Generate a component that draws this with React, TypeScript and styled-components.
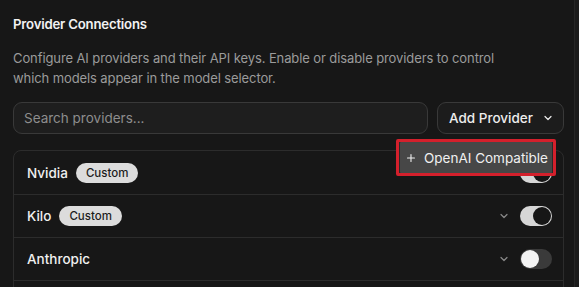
import React from "react";
import styled, { createGlobalStyle } from "styled-components";

const Global = createGlobalStyle`
  html, body { margin: 0; padding: 0; background: #171717; }
  body { font-family: "Inter", "Liberation Sans", sans-serif; color: #ededed; }
  * { box-sizing: border-box; }
`;

const Page = styled.div`
  width: 579px;
  height: 287px;
  display: flex;
  overflow: hidden;
  background: #171717;
`;

const Main = styled.div`
  flex: 1;
  padding: 14px 10px 0 13px;
  display: flex;
  flex-direction: column;
`;

const Edge = styled.div`
  width: 5px;
  border-left: 1px solid #262626;
  background: #1b1b1b;
`;

const Title = styled.h2`
  margin: 0;
  font-size: 13.2px;
  font-weight: 600;
  letter-spacing: -0.2px;
  line-height: 20px;
  color: #f2f2f2;
`;

const Desc = styled.p`
  margin: 15px 0 0;
  max-width: 500px;
  font-size: 13px;
  line-height: 19.5px;
  color: #9b9b9b;
  letter-spacing: -0.1px;
`;

const Toolbar = styled.div`
  margin-top: 14px;
  display: flex;
  gap: 9px;
`;

const Search = styled.input`
  flex: 1;
  height: 32px;
  border-radius: 9px;
  border: 1px solid #393939;
  background: #1e1e1e;
  padding: 0 10px;
  font-family: inherit;
  font-size: 13.5px;
  color: #eee;
  outline: none;
  &::placeholder { color: #8d8d8d; }
`;

const MenuAnchor = styled.div`
  position: relative;
`;

const AddButton = styled.button`
  height: 32px;
  width: 127px;
  border-radius: 9px;
  border: 1px solid #393939;
  background: #1c1c1c;
  color: #ededed;
  font-family: inherit;
  font-size: 13.5px;
  font-weight: 500;
  display: flex;
  align-items: center;
  justify-content: center;
  gap: 9px;
  padding: 0 8px 0 10px;
`;

const Menu = styled.div`
  position: absolute;
  top: 37px;
  right: 8px;
  width: 160px;
  border: 3px solid #d4202c;
  border-radius: 2px;
  background: #2a2a2a;
  z-index: 5;
`;

const MenuItem = styled.div`
  height: 31px;
  display: flex;
  align-items: center;
  gap: 7px;
  padding: 0 4px 0 5px;
  background: #474747;
  border-radius: 1px;
  color: #f0f0f0;
  font-size: 13.5px;
  white-space: nowrap;
  margin: 0 1px;
`;

const List = styled.div`
  margin-top: 16px;
  border: 1px solid #2c2c2c;
  border-radius: 8px;
  display: flex;
  flex-direction: column;
`;

const Row = styled.div`
  height: 43px;
  flex: none;
  display: flex;
  align-items: center;
  padding: 0 11px 0 13px;
  border-top: 1px solid #2c2c2c;
  &:first-child { border-top: none; }
`;

const Name = styled.span`
  font-size: 13.5px;
  font-weight: 500;
  color: #f0f0f0;
`;

const Badge = styled.span`
  margin-left: 8px;
  height: 20px;
  padding: 0 10px;
  border-radius: 10px;
  background: #dcdcdc;
  color: #1c1c1c;
  font-size: 11.5px;
  font-weight: 500;
  display: inline-flex;
  align-items: center;
`;

const Spacer = styled.div`
  flex: 1;
`;

const Chevron = styled.span`
  color: #8a8a8a;
  display: flex;
  margin-right: 10px;
`;

const Track = styled.span<{ $on: boolean }>`
  width: 32px;
  height: 20px;
  border-radius: 10px;
  background: ${(p) => (p.$on ? "#d6d6d6" : "#3a3a3a")};
  display: flex;
  align-items: center;
  justify-content: ${(p) => (p.$on ? "flex-end" : "flex-start")};
  padding: 1px;
`;

const Knob = styled.span<{ $on: boolean }>`
  width: 18px;
  height: 18px;
  border-radius: 50%;
  background: ${(p) => (p.$on ? "#161616" : "#f4f4f4")};
`;

const ChevronIcon = ({ size = 12 }: { size?: number }) => (
  <svg width={size} height={size} viewBox="0 0 24 24" fill="none" stroke="currentColor" strokeWidth={2.4} strokeLinecap="round" strokeLinejoin="round">
    <path d="m6 9 6 6 6-6" />
  </svg>
);

const PlusIcon = () => (
  <svg width={16} height={16} viewBox="0 0 24 24" fill="none" stroke="currentColor" strokeWidth={2.2} strokeLinecap="round">
    <path d="M5 12h14M12 5v14" />
  </svg>
);

const providers = [
  { name: "Nvidia", custom: true, on: true },
  { name: "Kilo", custom: true, on: true },
  { name: "Anthropic", custom: false, on: false },
];

export default function App() {
  return (
    <Page>
      <Global />
      <Main>
        <Title>Provider Connections</Title>
        <Desc>
          Configure AI providers and their API keys. Enable or disable providers to control which models appear in the model selector.
        </Desc>
        <Toolbar>
          <Search placeholder="Search providers..." />
          <MenuAnchor>
            <AddButton>
              Add Provider
              <ChevronIcon />
            </AddButton>
            <Menu>
              <MenuItem>
                <PlusIcon />
                OpenAI Compatible
              </MenuItem>
            </Menu>
          </MenuAnchor>
        </Toolbar>
        <List>
          {providers.map((p) => (
            <Row key={p.name}>
              <Name>{p.name}</Name>
              {p.custom && <Badge>Custom</Badge>}
              <Spacer />
              <Chevron>
                <ChevronIcon />
              </Chevron>
              <Track $on={p.on}>
                <Knob $on={p.on} />
              </Track>
            </Row>
          ))}
          <Row />
        </List>
      </Main>
      <Edge />
    </Page>
  );
}
